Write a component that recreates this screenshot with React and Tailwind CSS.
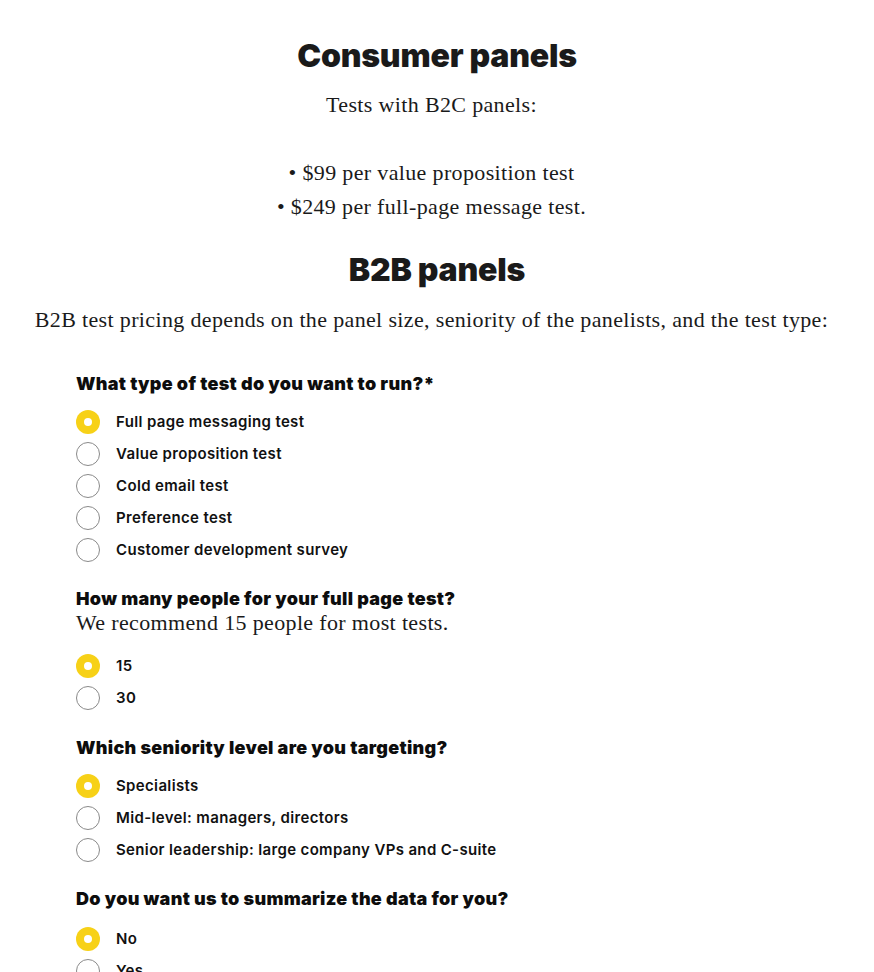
import React, { useState } from 'react';

const serif = { fontFamily: '"Liberation Serif", "DejaVu Serif", serif' };

const questions = [
  {
    id: 'type',
    title: 'What type of test do you want to run?*',
    options: [
      'Full page messaging test',
      'Value proposition test',
      'Cold email test',
      'Preference test',
      'Customer development survey',
    ],
  },
  {
    id: 'size',
    title: 'How many people for your full page test?',
    hint: 'We recommend 15 people for most tests.',
    options: ['15', '30'],
    gap: 'mt-[21px]',
  },
  {
    id: 'seniority',
    title: 'Which seniority level are you targeting?',
    options: ['Specialists', 'Mid-level: managers, directors', 'Senior leadership: large company VPs and C-suite'],
    gap: 'mt-[22px]',
  },
  {
    id: 'summary',
    title: 'Do you want us to summarize the data for you?',
    options: ['No', 'Yes'],
    gap: 'mt-[21px]',
    optGap: 'mt-[12px]',
  },
];

function Radio({ checked, label, onClick }) {
  return (
    <button type="button" onClick={onClick} className="flex items-center h-8 text-left">
      {checked ? (
        <span className="w-6 h-6 rounded-full bg-[#f7d117] flex items-center justify-center">
          <span className="w-2 h-2 rounded-full bg-white" />
        </span>
      ) : (
        <span className="w-6 h-6 rounded-full border border-[#8a8a8a] bg-white" />
      )}
      <span className="ml-4 text-[15px] font-semibold tracking-[0.35px] text-[#111] font-['Inter']">{label}</span>
    </button>
  );
}

export default function App() {
  const [answers, setAnswers] = useState({ type: 0, size: 0, seniority: 0, summary: 0 });

  return (
    <div className="bg-white min-h-screen text-[#1a1a1a] pt-[36px]">
      {/* Consumer */}
      <div className="text-center">
        <h1 className="text-[32px] leading-[40px] font-black tracking-[-0.2px] font-['Inter']">Consumer panels</h1>
        <div className="mt-[12px] pr-[11px] text-[22px] leading-[34px] tracking-[0.35px]" style={serif}>
          <p>Tests with B2C panels:</p>
          <p>&nbsp;</p>
          <p>• $99 per value proposition test</p>
          <p>• $249 per full-page message test.</p>
        </div>
      </div>

      {/* B2B */}
      <div className="text-center mt-[26px]">
        <h2 className="text-[32px] leading-[40px] font-black tracking-[-0.2px] font-['Inter']">B2B panels</h2>
        <p className="mt-[13px] pr-[11px] text-[22px] leading-[34px] tracking-[0.35px]" style={serif}>
          B2B test pricing depends on the panel size, seniority of the panelists, and the test type:
        </p>
      </div>

      {/* Form */}
      <div className="pl-[76px] mt-[35px]">
        {questions.map((q) => (
          <div key={q.id} className={q.gap || ''}>
            <h3 className="text-[18px] leading-[24px] font-black tracking-[0.3px] text-[#0d0d0d] font-['Inter']">{q.title}</h3>
            {q.hint && (
              <p className="text-[22px] leading-[26px] -mt-[1px] tracking-[0.35px]" style={serif}>{q.hint}</p>
            )}
            <div className={q.optGap || (q.hint ? 'mt-[14px]' : 'mt-[10px]')}>
              {q.options.map((opt, oi) => (
                <div key={opt}>
                  <Radio
                    checked={answers[q.id] === oi}
                    label={opt}
                    onClick={() => setAnswers({ ...answers, [q.id]: oi })}
                  />
                </div>
              ))}
            </div>
          </div>
        ))}
      </div>
    </div>
  );
}
